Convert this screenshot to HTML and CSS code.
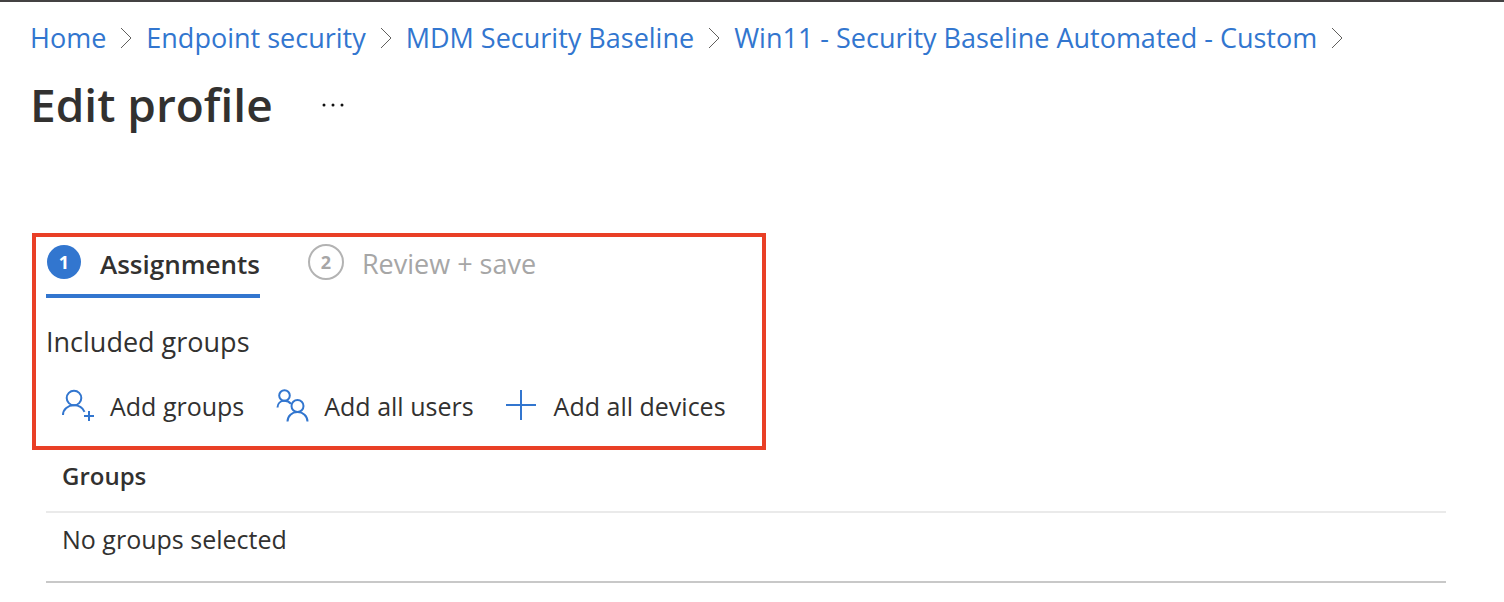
FILE: index.html
```html
<!DOCTYPE html>
<html lang="en">
<head>
<meta charset="utf-8">
<meta name="viewport" content="width=device-width, initial-scale=1">
<title>Edit profile</title>
<link rel="stylesheet" href="styles.css">
</head>
<body>
<nav class="breadcrumb" aria-label="Breadcrumb">
  <a href="#">Home</a>
  <svg class="chevron" viewBox="0 0 12 22" aria-hidden="true"><path d="M1 1 11 11 1 21"/></svg>
  <a href="#">Endpoint security</a>
  <svg class="chevron" viewBox="0 0 12 22" aria-hidden="true"><path d="M1 1 11 11 1 21"/></svg>
  <a href="#">MDM Security Baseline</a>
  <svg class="chevron" viewBox="0 0 12 22" aria-hidden="true"><path d="M1 1 11 11 1 21"/></svg>
  <a href="#">Win11 - Security Baseline Automated - Custom</a>
  <svg class="chevron" viewBox="0 0 12 22" aria-hidden="true"><path d="M1 1 11 11 1 21"/></svg>
</nav>
<header class="title-bar">
  <h1 class="title">Edit profile</h1>
  <button class="more" type="button" aria-label="More options">
    <svg viewBox="0 0 24 6" aria-hidden="true"><circle cx="3" cy="4" r="1.5"/><circle cx="12" cy="4" r="1.5"/><circle cx="21" cy="4" r="1.5"/></svg>
  </button>
</header>
<main>
  <section class="assignments">
    <div class="steps" role="tablist">
      <button class="step step-active" type="button" role="tab" aria-selected="true"><span class="badge">1</span><span>Assignments</span></button>
      <button class="step" type="button" role="tab" aria-selected="false"><span class="badge">2</span><span>Review + save</span></button>
    </div>
    <h2 class="subtitle">Included groups</h2>
    <div class="toolbar">
      <button class="command" type="button">
        <svg viewBox="0 0 32 32" aria-hidden="true"><circle cx="12" cy="8" r="7.300"/><path d="M1 25C1 19 6 15.300 12 15.300c4.500 0 8.500 2.200 10.500 6.500M27 21v10M22 26h10"/></svg>
        <span>Add groups</span>
      </button>
      <button class="command" type="button">
        <svg viewBox="0 0 32 32" aria-hidden="true"><circle cx="8.500" cy="5.500" r="5.300"/><circle cx="21.500" cy="16" r="6"/><path d="M1.500 17.500c0-4 3-6.700 7-6.700 3 0 5 1.200 6.500 3M11.500 31.500c0-5.500 4.500-9.500 10-9.500s10 4 10 9.500"/></svg>
        <span>Add all users</span>
      </button>
      <button class="command" type="button">
        <svg viewBox="0 0 32 32" aria-hidden="true"><path d="M15 0v30M0 15h30"/></svg>
        <span>Add all devices</span>
      </button>
    </div>
  </section>
  <table class="groups">
    <thead><tr><th scope="col">Groups</th></tr></thead>
    <tbody><tr><td>No groups selected</td></tr></tbody>
  </table>
</main>
</body>
</html>
```
FILE: styles.css
```css
* {
  box-sizing: border-box;
}

body {
  margin: 0;
  padding: 0 58px 18px 30px;
  border-top: 2px solid #444243;
  background: #fff;
  color: #323130;
  font-family: "Segoe UI", "Open Sans", "Noto Sans", sans-serif;
  font-size: 27px;
  line-height: 36px;
}

main {
  padding-left: 2px;
}

button {
  padding: 0;
  border: 0;
  background: none;
  color: inherit;
  font: inherit;
  cursor: pointer;
}

svg {
  display: block;
  overflow: visible;
  fill: none;
  stroke: currentColor;
}

.breadcrumb {
  display: flex;
  flex-wrap: wrap;
  align-items: center;
  gap: 14px;
  padding-top: 18px;
}

.breadcrumb a {
  color: #3276cf;
  text-decoration: none;
}

.chevron {
  width: 12px;
  height: 22px;
  color: #605e5c;
}

.title-bar {
  display: flex;
  align-items: center;
  gap: 48px;
  padding-top: 16px;
}

.title {
  margin: 0;
  font-size: 46px;
  font-weight: 600;
  line-height: 64px;
}

.more svg {
  width: 24px;
  height: 6px;
  fill: #111;
  stroke: none;
}

.assignments {
  width: fit-content;
  margin-top: 97px;
  padding: 6px 36px 22px 10px;
  border: 4px solid #e93f26;
}

.steps {
  display: flex;
  gap: 48px;
}

.step {
  display: flex;
  align-items: center;
  gap: 18px;
  height: 55px;
  padding-bottom: 9px;
  border-bottom: 4px solid transparent;
  color: #a6a6a6;
}

.step-active {
  border-color: #3276cf;
  color: #323130;
  font-size: 26px;
  font-weight: 600;
}

.badge {
  width: 36px;
  height: 36px;
  margin-bottom: 4px;
  border: 2px solid #b3b3b3;
  border-radius: 50%;
  font-size: 18px;
  font-weight: 700;
  line-height: 32px;
}

.step-active .badge {
  width: 34px;
  height: 34px;
  margin-inline: 1px;
  border: 0;
  background: #3276cf;
  color: #fff;
  line-height: 34px;
}

.subtitle {
  margin: 26px 0 0;
  font-size: 27px;
  font-weight: 400;
}

.toolbar {
  display: flex;
  gap: 32px;
  padding: 28px 0 0 16px;
  font-size: 25px;
}

.command {
  display: flex;
  align-items: center;
  gap: 16px;
}

.command svg {
  width: 32px;
  height: 32px;
  color: #3276cf;
  stroke-width: 2;
}

.groups {
  width: calc(100% - 14px);
  margin-left: 14px;
  border-collapse: collapse;
  font-size: 25px;
  text-align: left;
}

.groups th {
  padding: 8px 16px 17px;
  border-bottom: 2px solid #eaeaea;
  font-size: 24px;
  font-weight: 600;
}

.groups td {
  padding: 8px 16px 24px;
  border-bottom: 2px solid #c8c8c8;
}
```
